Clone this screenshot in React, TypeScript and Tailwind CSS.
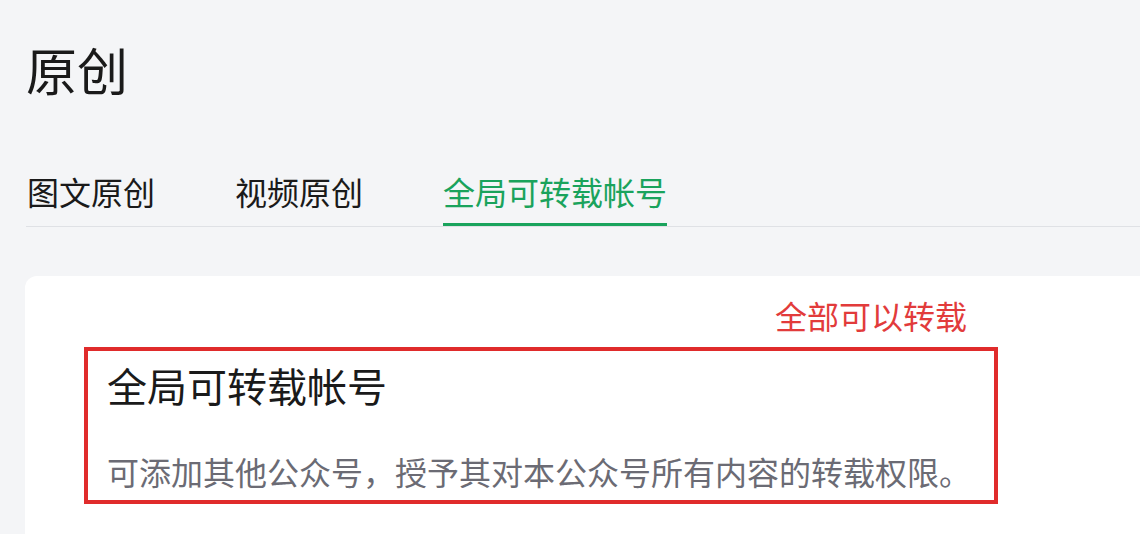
import React from 'react';

const font = { fontFamily: '"Noto Sans CJK SC", "Noto Sans", sans-serif' };

export default function App() {
  const tabs = ['图文原创', '视频原创', '全局可转载帐号'];
  const active = 2;

  return (
    <div className="h-[534px] w-full overflow-hidden bg-[#f4f5f7] pl-[26px]" style={font}>
      <h1 className="pt-[44px] text-[51px] leading-none font-normal text-[#1a1a1a]">原创</h1>

      {/* Tabs */}
      <div className="mt-[80px] flex gap-[80px] border-b border-[#dfe1e5] pl-px">
        {tabs.map((tab, i) => (
          <div
            key={tab}
            className={
              i === active
                ? 'border-b-[3px] border-[#1aa35c] pb-[16px] text-[32px] leading-none text-[#1aa35c]'
                : 'border-b-[3px] border-transparent pb-[16px] text-[32px] leading-none text-[#1a1a1a]'
            }
          >
            {tab}
          </div>
        ))}
      </div>

      {/* Card */}
      <div className="mt-[49px] ml-[-1px] h-[300px] rounded-tl-[12px] bg-white pt-[23px] pl-[59px]">
        <div className="pl-[691px] text-[32px] leading-none text-[#e23b3b]">全部可以转载</div>

        <div className="mt-[16px] w-[914px] border-4 border-[#e02b2b] pt-[14px] pb-[13px] pl-[19px]">
          <div className="text-[40px] leading-none text-[#1a1a1a]">全局可转载帐号</div>
          <div className="mt-[50px] text-[32px] leading-none text-[#6b6b74]">
            可添加其他公众号，授予其对本公众号所有内容的转载权限。
          </div>
        </div>
      </div>
    </div>
  );
}
